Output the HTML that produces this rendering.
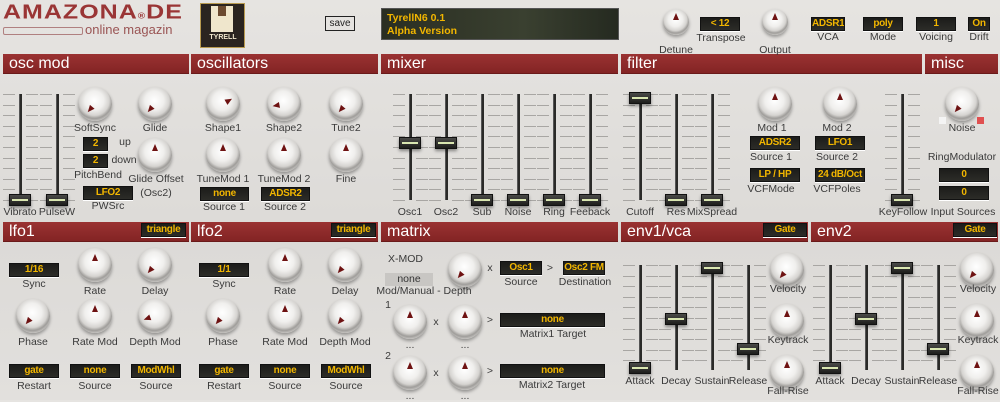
<!DOCTYPE html>
<html><head><meta charset="utf-8">
<style>
*{margin:0;padding:0;box-sizing:border-box}
body{width:1000px;height:400px;overflow:hidden;background:linear-gradient(180deg,#e6e4e1,#dcdad7 60%,#e2e0dd);font-family:"Liberation Sans",sans-serif;position:relative}
.a{position:absolute}
.hdr{position:absolute;height:20px;background:linear-gradient(180deg,#9a3232,#832424);color:#fff;font-size:16px;line-height:20px;padding-left:6px;border-bottom:1px solid #6a1a1a}
.lbl{position:absolute;font-size:10.5px;color:#3a3a3a;white-space:nowrap;transform:translateX(-50%);line-height:12px}
.dsp{position:absolute;background:linear-gradient(180deg,#1c1c1a,#2c2c28);border:1px solid #111;color:#f2b600;font-weight:bold;font-size:10px;letter-spacing:-0.3px;text-align:center;line-height:12px;box-shadow:0 1px 0 #fff;white-space:nowrap;overflow:hidden}
.knob{position:absolute;border-radius:50%;background:radial-gradient(circle at 48% 40%,#ffffff 0%,#f0efed 35%,#d5d3d0 55%,#9f9d9a 66%,#c4c2bf 76%,#8a8885 90%,#6e6c69 100%);box-shadow:0 2px 3px rgba(0,0,0,.35)}
.ptr{position:absolute;width:0;height:0;border-left:3.5px solid transparent;border-right:3.5px solid transparent;border-bottom:7px solid #6e1212}
.trk{position:absolute;width:3px;background:#2a2a28;border-left:1px solid #555}
.tick{position:absolute;height:1px;background:#a8a6a3}
.hnd{position:absolute;width:22px;height:12px;background:linear-gradient(180deg,#4a4a48,#1e1e1c);border:1px solid #111;box-shadow:0 2px 3px rgba(0,0,0,.4)}
.hnd:after{content:"";position:absolute;left:2px;right:2px;top:4px;height:2px;background:#d9e6b0}
</style></head><body>
<div class="a" style="left:3px;top:1px;font-size:25px;font-weight:bold;color:#9a3535;letter-spacing:1px;font-family:'Liberation Sans';transform:scaleY(.8);transform-origin:top left">AMAZONA<span style="font-size:10px">®</span>DE</div>
<div class="a" style="left:3px;top:27px;width:80px;height:8px;border:1px solid #b08080;border-radius:2px"></div>
<div class="a" style="left:85px;top:22px;font-size:13px;color:#9a5555">online magazin</div>
<div class="a" style="left:200px;top:3px;width:45px;height:45px;background:#2a2420;border:1px solid #b89a50">
 <div class="a" style="left:10px;top:2px;width:22px;height:26px;background:#efe6cc"></div>
 <div class="a" style="left:17px;top:2px;width:8px;height:10px;background:#6b4a30"></div>
 <div class="a" style="left:2px;top:30px;width:40px;font-size:7px;color:#efe6cc;font-weight:bold;text-align:center">TYRELL</div>
</div>
<div class="a" style="left:325px;top:16px;width:30px;height:15px;border:1px solid #222;font-size:10px;text-align:center;line-height:13px;color:#222">save</div>
<div class="a" style="left:381px;top:8px;width:238px;height:32px;background:linear-gradient(90deg,#2a2e22,#3a4030 60%,#252a20);border:1px solid #555;color:#f2b600;font-weight:bold;font-size:10.5px;padding:3px 5px;line-height:13px">TyrellN6 0.1<br>Alpha Version</div>
<script>
var R=document.body;
function el(c,s,t){var d=document.createElement('div');d.className=c;d.style.cssText=s;if(t!=null)d.textContent=t;R.appendChild(d);return d;}
function hdr(x,y,w,t){el('hdr','left:'+x+'px;top:'+y+'px;width:'+w+'px',t);}
function lbl(x,y,t){el('lbl','left:'+x+'px;top:'+(y-6)+'px',t);}
function dsp(x1,x2,y,t){el('dsp','left:'+x1+'px;top:'+y+'px;width:'+(x2-x1)+'px;height:14px',t);}
function knob(cx,cy,a,r){r=r||17;var k=el('knob','left:'+(cx-r)+'px;top:'+(cy-r)+'px;width:'+(2*r)+'px;height:'+(2*r)+'px');
 var rr=r*0.45,rad=a*Math.PI/180;var px=r+Math.sin(rad)*rr,py=r-Math.cos(rad)*rr;
 var p=document.createElement('div');p.className='ptr';p.style.cssText='left:'+(px-3.5)+'px;top:'+(py-3.5)+'px;transform:rotate('+a+'deg)';k.appendChild(p);}
function slider(x,y1,y2,h){for(var y=y1;y<=y2;y+=10.6){el('tick','left:'+(x-17)+'px;top:'+Math.round(y)+'px;width:12px');el('tick','left:'+(x+6)+'px;top:'+Math.round(y)+'px;width:12px');}
 el('trk','left:'+(x-1)+'px;top:'+y1+'px;height:'+(y2-y1)+'px');el('hnd','left:'+(x-11)+'px;top:'+(h-6)+'px');}
hdr(3,54,186,'osc mod');hdr(191,54,187,'oscillators');hdr(381,54,237,'mixer');hdr(621,54,301,'filter');hdr(925,54,73,'misc');
hdr(3,222,186,'lfo1');hdr(191,222,187,'lfo2');hdr(381,222,237,'matrix');hdr(621,222,187,'env1/vca');hdr(811,222,187,'env2');
dsp(141,186,223,'triangle');dsp(331,376,223,'triangle');dsp(763,807,223,'Gate');dsp(953,997,223,'Gate');
knob(676,22,0,13);lbl(676,50,'Detune');dsp(700,740,17,'< 12');lbl(721,38,'Transpose');
knob(775,22,0,13);lbl(775,50,'Output');
dsp(811,845,17,'ADSR1');lbl(828,37,'VCA');dsp(863,903,17,'poly');lbl(883,37,'Mode');
dsp(916,956,17,'1');lbl(936,37,'Voicing');dsp(968,990,17,'On');lbl(979,37,'Drift');
slider(20,94,200,200);slider(57,94,200,200);lbl(20,212,'Vibrato');lbl(57,212,'PulseW');
knob(95,104,-140);lbl(95,128,'SoftSync');knob(155,104,-140);lbl(155,128,'Glide');
dsp(83,108,137,'2');lbl(125,142,'up');dsp(83,108,154,'2');lbl(124,160,'down');lbl(98,175,'PitchBend');
dsp(83,133,186,'LFO2');lbl(108,206,'PWSrc');knob(155,155,0);lbl(156,179,'Glide Offset');lbl(156,193,'(Osc2)');
knob(223,104,60);lbl(223,128,'Shape1');knob(284,104,-100);lbl(284,128,'Shape2');knob(346,104,-140);lbl(346,128,'Tune2');
knob(223,155,0);lbl(223,179,'TuneMod 1');knob(284,155,0);lbl(284,179,'TuneMod 2');knob(346,155,0);lbl(346,179,'Fine');
dsp(200,249,187,'none');lbl(224,207,'Source 1');dsp(261,310,187,'ADSR2');lbl(285,207,'Source 2');
var mx=[[410,143,'Osc1'],[446,143,'Osc2'],[482,200,'Sub'],[518,200,'Noise'],[554,200,'Ring'],[590,200,'Feeback']];
mx.forEach(function(m){slider(m[0],94,200,m[1]);lbl(m[0],212,m[2]);});
slider(640,94,200,98);lbl(640,212,'Cutoff');slider(676,94,200,200);lbl(676,212,'Res');slider(712,94,200,200);lbl(712,212,'MixSpread');
knob(775,104,0);lbl(772,128,'Mod 1');knob(840,104,0);lbl(837,128,'Mod 2');
dsp(750,800,136,'ADSR2');lbl(771,157,'Source 1');dsp(815,865,136,'LFO1');lbl(837,157,'Source 2');
dsp(750,800,168,'LP / HP');lbl(771,189,'VCFMode');dsp(815,865,168,'24 dB/Oct');lbl(837,189,'VCFPoles');
slider(902,94,200,200);lbl(903,212,'KeyFollow');
knob(962,104,-140);lbl(962,128,'Noise');el('a','left:939px;top:117px;width:7px;height:7px;background:#f4f4f4');el('a','left:977px;top:117px;width:7px;height:7px;background:#e05050');
lbl(962,157,'RingModulator');dsp(939,989,168,'0');dsp(939,989,186,'0');lbl(963,212,'Input Sources');
[0,190].forEach(function(o,i){
 dsp(9+o,59+o,263,i?'1/1':'1/16');lbl(34+o,284,'Sync');
 knob(95+o,265,0);lbl(95+o,291,'Rate');knob(155+o,265,-140);lbl(155+o,291,'Delay');
 knob(33+o,316,-140);lbl(33+o,342,'Phase');knob(95+o,316,0);lbl(95+o,342,'Rate Mod');knob(155+o,316,i?-140:-110);lbl(155+o,342,'Depth Mod');
 dsp(9+o,59+o,364,'gate');lbl(34+o,386,'Restart');dsp(70+o,120+o,364,'none');lbl(95+o,386,'Source');dsp(131+o,181+o,364,'ModWhl');lbl(156+o,386,'Source');
});
el('a','left:388px;top:253px;font-size:10.5px;color:#3a3a3a','X-MOD');
el('a','left:385px;top:273px;width:48px;height:13px;background:#c8c6c3;font-size:10.5px;color:#333;text-align:center;line-height:13px','none');
lbl(424,291,'Mod/Manual - Depth');knob(465,270,-140);lbl(490,268,'x');
dsp(500,542,261,'Osc1');lbl(550,268,'>');dsp(563,605,261,'Osc2 FM');lbl(521,282,'Source');lbl(585,282,'Destination');
lbl(388,305,'1');knob(410,322,0);lbl(436,322,'x');knob(465,322,0);lbl(490,320,'>');lbl(410,345,'...');lbl(465,345,'...');
dsp(500,605,313,'none');lbl(553,334,'Matrix1 Target');
lbl(388,356,'2');knob(410,373,0);lbl(436,373,'x');knob(465,373,0);lbl(490,371,'>');lbl(410,396,'...');lbl(465,396,'...');
dsp(500,605,364,'none');lbl(552,385,'Matrix2 Target');
[0,190].forEach(function(o){
 var s=[[640,368,'Attack'],[676,319,'Decay'],[712,268,'Sustain'],[748,349,'Release']];
 s.forEach(function(m){slider(m[0]+o,265,370,m[1]);lbl(m[0]+o,381,m[2]);});
 knob(787+o,270,-140);lbl(788+o,289,'Velocity');knob(787+o,321,0);lbl(788+o,340,'Keytrack');knob(787+o,372,0);lbl(788+o,391,'Fall-Rise');
});
</script>
</body></html>
